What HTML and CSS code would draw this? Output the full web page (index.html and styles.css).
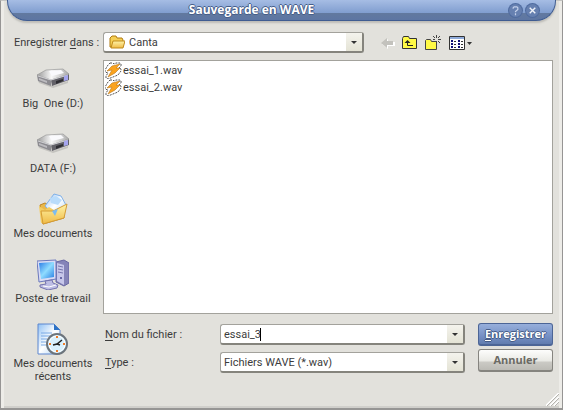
FILE: index.html
```html
<!DOCTYPE html>
<html lang="fr">
<head>
<meta charset="utf-8">
<title>Sauvegarde en WAVE</title>
<link rel="stylesheet" href="styles.css">
</head>
<body>
<svg class="defs" aria-hidden="true">
  <defs>
    <linearGradient id="metal" x1="0" x2="1" y1="0" y2="0"><stop offset="0" stop-color="#999"/><stop offset=".45" stop-color="#f8f8f8"/><stop offset="1" stop-color="#aaa"/></linearGradient>
    <linearGradient id="gold" x1="0" x2="0" y1="0" y2="1"><stop offset="0" stop-color="#fff4a8"/><stop offset="1" stop-color="#efba45"/></linearGradient>
    <linearGradient id="screen" x1="0" x2="1" y1="0" y2="1"><stop offset="0" stop-color="#2a7be6"/><stop offset=".5" stop-color="#8fdcff"/><stop offset="1" stop-color="#2a80e4"/></linearGradient>
    <linearGradient id="sheet" x1="0" x2="1" y1="0" y2="1"><stop offset="0" stop-color="#8fc0f4"/><stop offset=".5" stop-color="#fff"/><stop offset="1" stop-color="#a8d0f4"/></linearGradient>
    <symbol id="drive" viewBox="0 0 32 32">
      <path d="M1 17l15 6 15-5v2l-15 5-14-5z" fill="#c4c3bf"/>
      <path d="M0 12l14 5v6L1 18z" fill="#8c8b90"/>
      <path d="M14 17l18-6v6l-17 6z" fill="#626168"/>
      <path d="M0 12l9-5 17-1 6 5-18 6z" fill="url(#metal)" stroke="#999" stroke-width=".7"/>
      <path d="M12 8l12-1 3 3-12 3z" fill="#fafafd"/>
      <path d="M1 13l13 4 17-5" fill="none" stroke="#d0d0d4"/>
      <path d="M2 15l8 3v2l-8-3z" fill="#bcbbbf"/>
      <path d="M19 18l7-2v2l-7 3z" fill="#2e2e33"/>
      <path d="M27 13l4-1v5l-4 1z" fill="#a5a5ee"/>
    </symbol>
    <symbol id="winamp" viewBox="0 0 17 17">
      <path d="M5 1h3l1 1 2-1h4l1 1v2l-2 2 2 1v2l-3 4-5 2-5 2-2-1V14l2-3-3-1V8l3-5z" fill="#fff" stroke="#555" stroke-dasharray="2 1"/>
      <path d="M15 2L7 4 2 9l5-1-4 7 7-4 5-5h-4z" fill="#fba31d" stroke="#b8771c" stroke-width=".6"/>
    </symbol>
  </defs>
</svg>
<form class="dialog">
  <header class="titlebar">
    <h1>Sauvegarde en WAVE</h1>
    <div class="caption-buttons">
      <button type="button" aria-label="Aide"><svg viewBox="0 0 14 14"><path d="M4.500 5V4l1-1h3l1 1v2L7 8v1M7 10v2" fill="none" stroke="#c3d0ea" stroke-width="1.300"/></svg></button>
      <button type="button" aria-label="Fermer"><svg viewBox="0 0 14 14"><path d="M4 4l6 6M10 4l-6 6" stroke="#f0f3fa" stroke-width="1.500"/></svg></button>
    </div>
  </header>

  <div class="location">
    <label for="folder">Enregistrer <u>d</u>ans :</label>
    <div class="combo folder-combo">
      <svg class="folder-icon" viewBox="0 0 16 14"><path d="M1 12V3l2-2h4l1 2h5l1 2v7z" fill="#f5cf55" stroke="#b07a10"/><path d="M4 6h12l-2 7H2z" fill="url(#gold)" stroke="#c08a1c"/></svg>
      <select id="folder"><option>Canta</option></select>
    </div>
    <div class="toolbar">
      <button type="button" aria-label="Retour"><svg width="14" height="12" viewBox="0 0 14 12"><path d="M0 6l6-5v3h7v4H6v3z" transform="translate(1 1)" fill="#fff"/><path d="M0 6l6-5v3h6v4H6v3z" fill="#c3c2bd"/></svg></button>
      <button type="button" aria-label="Dossier parent"><svg width="16" height="14" viewBox="0 0 16 14"><path d="M.5 12.500v-10l1-2h5l1 2h7v10z" fill="#fffa46" stroke="#333"/><path d="M5.500 5v4.500H11" fill="none" stroke="#222"/><path d="M2.500 7l3-3 3 3z" fill="#222"/></svg></button>
      <button type="button" aria-label="Nouveau dossier"><svg width="17" height="15" viewBox="0 0 17 15"><path d="M.5 14.500v-9l1-1h4l1 2h5v8z" fill="#fffa46" stroke="#444"/><path d="M11.500 0v3M11.500 6v2M8 1l2 2M15 1l-2 2M13 4.500h3M8 4.500h2M13 6l2 2" stroke="#444"/></svg></button>
      <button type="button" aria-label="Affichage"><svg width="23" height="14" viewBox="0 0 23 14"><path d="M.5.5h15v13H.5z" fill="#fff" stroke="#333"/><path d="M1 1h14v2H1z" fill="#8fabda"/><path d="M2 5h2M2 8h2M2 11h2M9 5h2M9 8h2M9 11h2" stroke="#101078" stroke-width="2"/><path d="M5 5.500h2M5 8.500h2M5 11.500h2M12 5.500h2M12 8.500h2M12 11.500h2" stroke="#333"/><path d="M18 6h5l-2.500 3z" fill="#333"/></svg></button>
    </div>
  </div>

  <div class="main">
    <nav class="places" aria-label="Emplacements">
      <button type="button"><svg viewBox="0 0 32 32"><use href="#drive"/></svg><span>Big&nbsp; One (D:)</span></button>
      <button type="button"><svg viewBox="0 0 32 32"><use href="#drive"/></svg><span>DATA (F:)</span></button>
      <button type="button"><svg viewBox="0 0 32 32">
        <path d="M3 12l5-2 4 2 14-1 1 14L6 31z" fill="#e9b84a" stroke="#bd8525"/>
        <path d="M17 1l7 2 5 9-10 11L8 13z" fill="url(#sheet)" stroke="#7fb0e8"/>
        <path d="M13 5l6-2 6 4-4 5-7-2z" fill="#b9dcfb"/>
        <path d="M2 13l2 17 13-3V17l-5-3-4 3-6-4z" fill="#f3cd62"/>
        <path d="M4 18h12l14-7-3 14-21 6z" fill="url(#gold)" stroke="#d59c34"/>
        <path d="M15 18l6-2-3 7z" fill="#7cbcf0"/>
      </svg><span>Mes documents</span></button>
      <button type="button"><svg viewBox="0 0 32 32">
        <path d="M19 4l8-2 5 3v20l-5 3-8-4z" fill="#8584b8" stroke="#6867a2"/><path d="M20 5l7 2v20l-7-4z" fill="#c7c7ea"/><path d="M21 8l5 1M21 11l5 1M21 14l5 1" stroke="#7776ad"/><circle cx="24" cy="20" r="1" fill="#4b4a91"/>
        <path d="M0 3l19-1v19L2 24z" fill="#d9dcf5" stroke="#6b78bc"/><path d="M2 5l15-1v15L4 21z" fill="url(#screen)"/>
        <path d="M8 23l7-1 1 3 5 2-1 3-9 2-8-3v-2l6-1z" fill="#bdbde4" stroke="#7473ae"/><path d="M6 28l6 1 7-2" stroke="#fff" fill="none"/>
      </svg><span>Poste de travail</span></button>
      <button type="button"><svg viewBox="0 0 32 32">
        <path d="M1 1h16l6 6v24H1z" fill="url(#sheet)" stroke="#5d86cf"/><path d="M17 1v6h6z" fill="#2d72c6"/>
        <path d="M4 10h11M4 13h9M4 16h6M4 19h5M4 22h5" stroke="#78a9e5"/>
        <circle cx="20" cy="21" r="10" fill="#d9f1fe" stroke="#6c747c" stroke-width="2"/><circle cx="20" cy="21" r="8" fill="none" stroke="#fff"/>
        <path d="M20 13v2M20 27v2M12 21h2M26 21h2" stroke="#ee7b27" stroke-width="2"/><path d="M25 17l-5 4-4 1M20 21l3 1" fill="none" stroke="#222" stroke-width="1.500"/>
      </svg><span>Mes documents récents</span></button>
    </nav>

    <div class="content">
      <ul class="files">
        <li><svg viewBox="0 0 17 17"><use href="#winamp"/></svg>essai_1.wav</li>
        <li><svg viewBox="0 0 17 17"><use href="#winamp"/></svg>essai_2.wav</li>
      </ul>
      <div class="footer">
        <div class="fields">
          <label for="filename"><u>N</u>om du fichier :</label>
          <div class="combo"><input id="filename" type="text" value="essai_3"><span class="caret"></span></div>
          <label for="filetype"><u>T</u>ype :</label>
          <div class="combo"><select id="filetype"><option>Fichiers WAVE (*.wav)</option></select></div>
        </div>
        <div class="actions">
          <button type="submit" class="primary"><u>E</u>nregistrer</button>
          <button type="button" class="secondary">Annuler</button>
        </div>
      </div>
    </div>
  </div>
  <svg class="grip" viewBox="0 0 13 13" aria-hidden="true"><path d="M0 13L13 0M4 13l9-9M8 13l5-5" stroke="#fff" stroke-width="2"/><path d="M1 13L13 1M5 13l8-8M9 13l4-4" stroke="#b4b3ae"/></svg>
</form>
</body>
</html>
```
FILE: styles.css
```css
* { box-sizing: border-box; }
body {
  margin: 0;
  background: #e2e1dc;
  color: #3c3c3c;
  font: 11px/13px Roboto, "Liberation Sans", sans-serif;
}
button, input, select { font: inherit; color: inherit; margin: 0; }
button { padding: 0; border: 0; background: none; }
svg { display: block; flex: none; }
u { text-underline-offset: 2px; }
.defs { position: absolute; width: 0; height: 0; }

.dialog {
  position: relative;
  display: flex;
  flex-direction: column;
  min-height: 100vh;
  border: 1px solid #969594;
  border-top-color: #c4c4c2;
  border-bottom-width: 2px;
  box-shadow: inset 3px 0 #edece8, inset -3px 0 #edece8, inset 0 -2px #d0cfcb;
}

.titlebar {
  display: flex;
  align-items: center;
  height: 21px;
  margin: -1px 6px 0;
  padding: 0 16px;
  border: 1px solid #3f5c91;
  border-top: 0;
  border-radius: 0 0 20px 20px;
  background: linear-gradient(#a6bde4, #809dcf 13px, #62799f 13px, #5d76a3);
  box-shadow: 0 2px 2px #bdbcb7;
}
h1 {
  flex: 1;
  margin: 0;
  padding-right: 30px;
  color: #fff;
  font: bold 12px/20px "Open Sans", sans-serif;
  text-align: center;
  white-space: nowrap;
  text-shadow: 1px 0 #465d88, -1px 0 #465d88, 0 1px #465d88, 0 -1px #465d88;
}
.caption-buttons { display: flex; gap: 4px; }
.caption-buttons button {
  width: 13px;
  height: 13px;
  border-radius: 50%;
  background: #6680b0;
  box-shadow: 0 0 0 1px #4f6b9f;
}

.location {
  display: grid;
  grid-template-columns: 89px minmax(0, 261fr) minmax(0, 189fr);
  align-items: center;
  padding: 11px 9px 7px 13px;
}
.location label { white-space: nowrap; }
.combo {
  position: relative;
  height: 21px;
  border: 1px solid #a3a29c;
  border-right: 2px solid #85847d;
  border-bottom: 2px solid #85847d;
  border-radius: 3px;
  background: #fff;
}
.combo::before,
.combo::after {
  content: "";
  position: absolute;
  pointer-events: none;
}
.combo::before {
  top: 0;
  right: 0;
  width: 16px;
  height: 100%;
  background: linear-gradient(#f4f3ed, #e4e3d5);
}
.combo::after {
  top: 8px;
  right: 5px;
  border: 3px solid transparent;
  border-top: 3px solid #333;
  border-bottom: 0;
}
.combo select, .combo input {
  display: block;
  appearance: none;
  width: 100%;
  height: 18px;
  padding: 0 18px 0 3px;
  border: 0;
  outline: 0;
  background: transparent;
}
.caret {
  position: absolute;
  left: 39px;
  top: 3px;
  width: 1px;
  height: 13px;
  background: #000;
}
.folder-combo select { padding-left: 25px; }
.folder-icon { position: absolute; left: 5px; top: 2px; width: 16px; height: 14px; }
.toolbar { display: flex; align-items: center; gap: 7px; padding-left: 17px; }

.main { display: grid; grid-template-columns: 102px minmax(0, 1fr); padding-right: 9px; }
.places { display: flex; flex-direction: column; align-items: center; gap: 18px; padding: 3px 0 0 2px; }
.places button {
  display: flex;
  flex-direction: column;
  align-items: center;
  gap: 2px;
  width: 80px;
}
.places svg { width: 32px; height: 32px; }

.files {
  height: 254px;
  margin: 0;
  padding: 1px;
  border: 1px solid #a3a29c;
  background: #fff;
  list-style: none;
}
.files li { display: flex; align-items: center; gap: 1px; height: 17px; }
.files svg { width: 17px; height: 17px; }

.footer { display: flex; gap: 13px; margin-top: 9px; }
.fields {
  flex: 1;
  display: grid;
  grid-template-columns: 115px 1fr;
  gap: 7px 0;
  align-items: center;
  align-content: start;
  padding: 1px 0 0 2px;
}
.actions { display: flex; flex-direction: column; gap: 3px; width: 75px; }
.actions button {
  height: 23px;
  border: 1px solid #85847f;
  border-bottom-width: 2px;
  border-radius: 3px;
  font: bold 11px/18px "Open Sans", sans-serif;
}
.actions .primary {
  border-color: #4c6596;
  background: linear-gradient(#97afdb, #7590c5 60%, #617cae);
  color: #fff;
  text-shadow: 1px 0 #465d88, -1px 0 #465d88, 0 1px #465d88, 0 -1px #465d88;
}
.actions .secondary {
  background: linear-gradient(#fdfdfc, #e9e9e4 55%, #cbcac5 60%, #bcbbb5);
  color: #6b6a64;
}
.grip { position: absolute; right: 3px; bottom: 2px; width: 13px; height: 13px; }
```
